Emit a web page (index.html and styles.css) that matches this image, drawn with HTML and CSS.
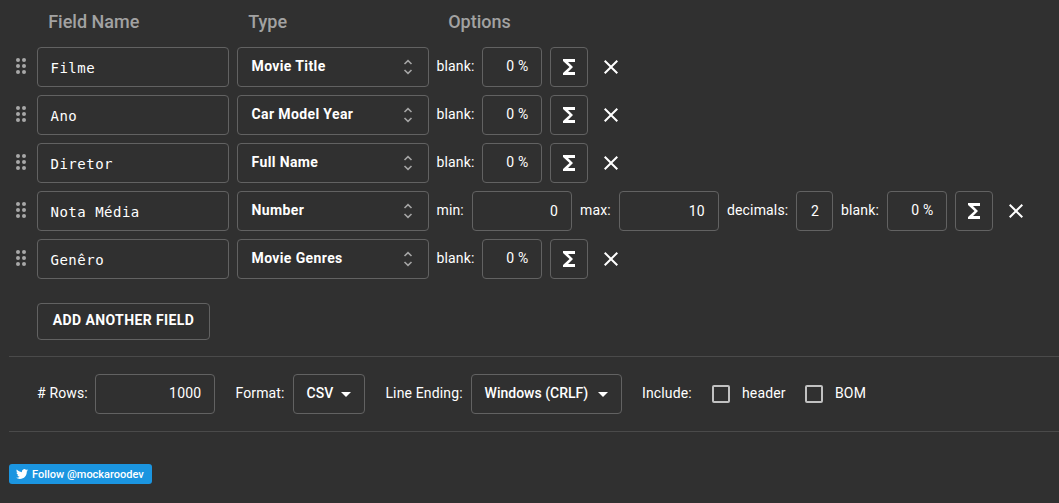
FILE: index.html
```html
<!DOCTYPE html>
<html lang="en">
<head>
<meta charset="utf-8">
<title>Schema</title>
<link rel="stylesheet" href="styles.css">
</head>
<body>
<svg class="defs" width="0" height="0">
  <symbol id="grip" viewBox="0 0 12 18"><circle cx="3" cy="3" r="2"/><circle cx="9" cy="3" r="2"/><circle cx="3" cy="9" r="2"/><circle cx="9" cy="9" r="2"/><circle cx="3" cy="15" r="2"/><circle cx="9" cy="15" r="2"/></symbol>
  <symbol id="sort" viewBox="0 0 10 16"><path d="M1.500 5 5 1.700 8.500 5M1.500 11 5 14.300 8.500 11"/></symbol>
  <symbol id="sigma" viewBox="0 0 24 24"><path d="M18 4H6v2l6.500 6L6 18v2h12v-3h-7l5-5-5-5h7z"/></symbol>
  <symbol id="close" viewBox="0 0 24 24"><path d="M19 6.410 17.590 5 12 10.590 6.410 5 5 6.410 10.590 12 5 17.590 6.410 19 12 13.410 17.590 19 19 17.590 13.410 12z"/></symbol>
</svg>
<main class="page">
  <header class="heads"><span>Field Name</span><span>Type</span><span>Options</span></header>
  <section class="fields">
    <div class="row">
      <svg class="grip"><use href="#grip"/></svg>
      <div class="box name">Filme</div>
      <div class="box type">Movie Title<svg class="sort"><use href="#sort"/></svg></div>
      <span class="label blank">blank:</span><div class="box num pct">0 %</div>
      <div class="box formula"><svg><use href="#sigma"/></svg></div><svg class="close"><use href="#close"/></svg>
    </div>
    <div class="row">
      <svg class="grip"><use href="#grip"/></svg>
      <div class="box name">Ano</div>
      <div class="box type">Car Model Year<svg class="sort"><use href="#sort"/></svg></div>
      <span class="label blank">blank:</span><div class="box num pct">0 %</div>
      <div class="box formula"><svg><use href="#sigma"/></svg></div><svg class="close"><use href="#close"/></svg>
    </div>
    <div class="row">
      <svg class="grip"><use href="#grip"/></svg>
      <div class="box name">Diretor</div>
      <div class="box type">Full Name<svg class="sort"><use href="#sort"/></svg></div>
      <span class="label blank">blank:</span><div class="box num pct">0 %</div>
      <div class="box formula"><svg><use href="#sigma"/></svg></div><svg class="close"><use href="#close"/></svg>
    </div>
    <div class="row">
      <svg class="grip"><use href="#grip"/></svg>
      <div class="box name">Nota Média</div>
      <div class="box type">Number<svg class="sort"><use href="#sort"/></svg></div>
      <span class="label min">min:</span><div class="box num range">0</div>
      <span class="label max">max:</span><div class="box num range">10</div>
      <span class="label decimals">decimals:</span><div class="box num digit">2</div>
      <span class="label blank wide">blank:</span><div class="box num pct">0 %</div>
      <div class="box formula"><svg><use href="#sigma"/></svg></div><svg class="close"><use href="#close"/></svg>
    </div>
    <div class="row">
      <svg class="grip"><use href="#grip"/></svg>
      <div class="box name">Genêro</div>
      <div class="box type">Movie Genres<svg class="sort"><use href="#sort"/></svg></div>
      <span class="label blank">blank:</span><div class="box num pct">0 %</div>
      <div class="box formula"><svg><use href="#sigma"/></svg></div><svg class="close"><use href="#close"/></svg>
    </div>
  </section>
  <div class="box add">ADD ANOTHER FIELD</div>
  <section class="output">
    <span class="label rows">#&nbsp;Rows:</span><div class="box num count">1000</div>
    <span class="label format">Format:</span><div class="box select csv"><span>CSV</span><i class="caret"></i></div>
    <span class="label ending">Line Ending:</span><div class="box select crlf"><span>Windows (CRLF)</span><i class="caret"></i></div>
    <span class="label include">Include:</span>
    <i class="check"></i><span class="label header">header</span>
    <i class="check"></i><span class="label">BOM</span>
  </section>
  <a class="follow"><svg viewBox="0 0 24 24"><path d="M23.950 4.570a10 10 0 0 1-2.820.770 4.960 4.960 0 0 0 2.160-2.720c-.950.550-2 .950-3.130 1.180a4.920 4.920 0 0 0-8.380 4.480C7.690 8.100 4.070 6.130 1.640 3.160a4.820 4.820 0 0 0-.670 2.480c0 1.710.870 3.210 2.190 4.100a4.900 4.900 0 0 1-2.230-.620v.060a4.920 4.920 0 0 0 3.950 4.830 5 5 0 0 1-2.210.080 4.940 4.940 0 0 0 4.600 3.420A9.870 9.870 0 0 1 0 19.540a13.990 13.990 0 0 0 7.560 2.210c9.050 0 14-7.500 14-13.980 0-.210 0-.420-.020-.630a9.940 9.940 0 0 0 2.460-2.550z"/></svg><span>Follow @mockaroodev</span></a>
</main>
</body>
</html>
```
FILE: styles.css
```css
* { box-sizing: border-box; }
body { margin: 0; background: #303030; color: #fff; font: 500 14px/20px Roboto, sans-serif; }
.defs { display: block; }
.page { height: 503px; overflow: hidden; }
.heads { height: 47px; padding: 10px 0 0 48.2px; display: grid; grid-template-columns: 200px 200px 1fr; font-size: 18px; line-height: 24px; color: #a2a2a2; font-weight: 500; }
.fields { display: flex; flex-direction: column; gap: 8px; }
.row { display: flex; height: 40px; gap: 8px; padding-left: 15px; }
.box { height: 40px; border: 1px solid #626262; border-radius: 4px; flex: none; }
.grip { width: 12px; height: 18px; margin: 10px 2px 0 0; fill: #a8a8a8; flex: none; }
.name { width: 192px; padding: 10px 12.5px; font: 14px/20px "DejaVu Sans Mono", monospace; letter-spacing: .5px; }
.type { width: 192px; display: flex; justify-content: space-between; padding: 8px 15px 0 13.5px; font-weight: 700; letter-spacing: .38px; }
.sort { width: 10px; height: 16px; margin-top: 3px; fill: none; stroke: #a5a5a5; stroke-width: 1.6; }
.label { flex: none; padding-top: 9px; white-space: nowrap; font-weight: 400; text-indent: -.5px; letter-spacing: .15px; }
.blank { width: 37px; }
.wide { width: 38px; }
.min { width: 27px; }
.max { width: 31px; }
.decimals { width: 61px; }
.max, .decimals, .wide { text-indent: 0; }
.num { text-align: right; padding: 8px 12.5px; font-weight: 400; letter-spacing: .25px; }
.pct { width: 60px; }
.range { width: 100px; }
.digit { width: 37px; }
.range, .digit { padding: 9px 13px; }
.formula { width: 38px; display: flex; align-items: center; justify-content: center; }
.formula svg { width: 24px; height: 24px; fill: #fff; }
.close { width: 24px; height: 24px; margin: 8px 0 0 3px; fill: #fff; flex: none; }
.add { width: 173px; height: 37px; margin: 24px 0 16px 37px; text-align: center; line-height: 33px; font-weight: 700; letter-spacing: .4px; }
.output { height: 76px; margin-left: 9px; border: solid #4a4a4a; border-width: 1px 0; display: flex; padding: 17px 0 0 28px; }
.output .label { text-indent: 0; }
.rows { width: 58px; }
.count { width: 120px; margin-right: 20px; }
.format { width: 58px; }
.select { display: flex; align-items: flex-start; padding: 8px 13px 8px 12.6px; }
.csv { width: 72px; margin-right: 20px; }
.crlf { width: 151px; margin-right: 20px; }
.ending { width: 86px; }
.output .format, .output .ending { text-indent: .4px; }
.select span { flex: 1; white-space: nowrap; }
.caret { margin-top: 9px; border: 5px solid transparent; border-top-color: #fff; border-bottom: 0; }
.include { width: 70px; }
.check { width: 18px; height: 18px; border: 2px solid #c1c1c1; border-radius: 2px; margin: 11px 12px 0 0; flex: none; }
.header { width: 63px; }
.follow { width: 143px; height: 20px; margin: 32px 0 0 9px; display: flex; align-items: center; gap: 4px; padding-left: 7px; border-radius: 3px; background: #1b95e0; font: 500 11px/20px Roboto, sans-serif; white-space: nowrap; }
.follow span { padding-top: 1px; }
.follow svg { width: 12px; height: 12px; fill: #fff; flex: none; }
```
